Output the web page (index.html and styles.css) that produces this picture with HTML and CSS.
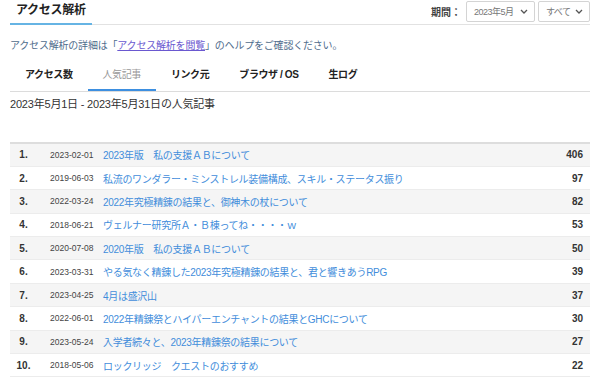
FILE: index.html
```html
<!DOCTYPE html>
<html lang="ja">
<head>
    <meta charset="UTF-8">
    <title>アクセス解析</title>
    <link rel="stylesheet" href="styles.css">
</head>
<body>
    <div class="page">
        <div class="head">
            <h1 class="title">アクセス解析</h1>
            <div class="period">
                <span class="period-label">期間：</span>
                <div class="select select-month"><span>2023年5月</span>
                    <svg class="chev" width="8" height="5" viewBox="0 0 8 5"><path d="M1 1l3 3 3-3" fill="none" stroke="#555" stroke-width="1.3"/></svg>
                </div>
                <div class="select select-kind"><span>すべて</span>
                    <svg class="chev" width="8" height="5" viewBox="0 0 8 5"><path d="M1 1l3 3 3-3" fill="none" stroke="#555" stroke-width="1.3"/></svg>
                </div>
            </div>
        </div>

        <p class="help">アクセス解析の詳細は「<a href="#">アクセス解析を閲覧</a>」のヘルプをご確認ください。</p>

        <div class="tabs">
            <span class="tab">アクセス数</span>
            <span class="tab active">人気記事</span>
            <span class="tab">リンク元</span>
            <span class="tab">ブラウザ / OS</span>
            <span class="tab">生ログ</span>
        </div>

        <p class="range">2023年5月1日 - 2023年5月31日の人気記事</p>

        <table class="ranking">
            <colgroup>
                <col class="c-rank">
                <col class="c-date">
                <col>
                <col class="c-count">
            </colgroup>
            <tr><td class="rank">1.</td><td class="date">2023-02-01</td><td class="post"><a href="#">2023年版　私の支援ＡＢについて</a></td><td class="count">406</td></tr>
            <tr><td class="rank">2.</td><td class="date">2019-06-03</td><td class="post"><a href="#">私流のワンダラー・ミンストレル装備構成、スキル・ステータス振り</a></td><td class="count">97</td></tr>
            <tr><td class="rank">3.</td><td class="date">2022-03-24</td><td class="post"><a href="#">2022年究極精錬の結果と、御神木の杖について</a></td><td class="count">82</td></tr>
            <tr><td class="rank">4.</td><td class="date">2018-06-21</td><td class="post"><a href="#">ヴェルナー研究所Ａ・Ｂ棟ってね・・・・ｗ</a></td><td class="count">53</td></tr>
            <tr><td class="rank">5.</td><td class="date">2020-07-08</td><td class="post"><a href="#">2020年版　私の支援ＡＢについて</a></td><td class="count">50</td></tr>
            <tr><td class="rank">6.</td><td class="date">2023-03-31</td><td class="post"><a href="#">やる気なく精錬した2023年究極精錬の結果と、君と響きあうRPG</a></td><td class="count">39</td></tr>
            <tr><td class="rank">7.</td><td class="date">2023-04-25</td><td class="post"><a href="#">4月は盛沢山</a></td><td class="count">37</td></tr>
            <tr><td class="rank">8.</td><td class="date">2022-06-01</td><td class="post"><a href="#">2022年精錬祭とハイパーエンチャントの結果とGHCについて</a></td><td class="count">30</td></tr>
            <tr><td class="rank">9.</td><td class="date">2023-05-24</td><td class="post"><a href="#">入学者続々と、2023年精錬祭の結果について</a></td><td class="count">27</td></tr>
            <tr><td class="rank">10.</td><td class="date">2018-05-06</td><td class="post"><a href="#">ロックリッジ　クエストのおすすめ</a></td><td class="count">22</td></tr>
        </table>
    </div>
</body>
</html>
```

FILE: styles.css
```css
body, html {
    margin: 0;
    padding: 0;
    background: #fff;
    font-family: "Liberation Sans", "Noto Sans CJK JP", sans-serif;
    color: #333;
}

.page {
    padding: 0 10px;
}

/* header with title and period selects */
.head {
    display: flex;
    justify-content: space-between;
    border-bottom: 1px solid #e2e2e2;
    height: 24px;
}

.title {
    margin: 0 0 -1px 0;
    padding: 3px 6px 0;
    font-size: 12px;
    font-weight: bold;
    letter-spacing: -0.3px;
    line-height: 14px;
    color: #222;
    border-bottom: 2px solid #66b4e4;
    box-sizing: border-box;
    height: 25px;
}

.period {
    display: flex;
    align-items: center;
    height: 21px;
    margin-top: 1px;
    gap: 3px;
}

.period-label {
    font-size: 10px;
    font-weight: bold;
    color: #444;
    margin-right: 2px;
}

.select {
    box-sizing: border-box;
    height: 21px;
    border: 1px solid #d4d4d4;
    border-radius: 2px;
    display: flex;
    align-items: center;
    justify-content: space-between;
    padding: 0 6px 0 7px;
    font-size: 9px;
    color: #777;
    letter-spacing: -0.5px;
}

.select-month {
    width: 69px;
}

.select-kind {
    width: 52px;
}

.help {
    margin: 14px 0 0;
    font-size: 10px;
    line-height: 14px;
    letter-spacing: -0.2px;
    color: #4f6c8c;
}

.help a {
    color: #6a58d0;
}

/* tabs */
.tabs {
    display: flex;
    margin-top: 7px;
    border-bottom: 1px solid #dcdcdc;
}

.tab {
    padding: 8px 15px 7px;
    font-size: 10px;
    line-height: 14px;
    font-weight: bold;
    letter-spacing: -0.4px;
    color: #222;
    border-bottom: 2px solid transparent;
}

.tab.active {
    color: #999;
    font-weight: normal;
    border-bottom-color: #3d8fe0;
}

.range {
    margin: 5px 0 0;
    font-size: 11px;
    line-height: 14px;
    color: #333;
    letter-spacing: -0.2px;
}

/* ranking table */
.ranking {
    margin-top: 31px;
    width: 100%;
    border-collapse: collapse;
    table-layout: fixed;
    border-top: 2px solid #dddddd;
}

.c-rank {
    width: 27px;
}

.c-date {
    width: 66px;
}

.c-count {
    width: 50px;
}

.ranking tr {
    height: 23.4px;
    border-bottom: 1px solid #ececec;
}

.ranking tr:nth-child(odd) {
    background: #f5f5f5;
}

.ranking td {
    padding: 0;
    white-space: nowrap;
    overflow: hidden;
}

.rank {
    text-align: center;
    font-size: 10px;
    font-weight: bold;
    color: #333;
}

.date {
    padding-left: 13px !important;
    font-size: 8.5px;
    color: #444;
}

.post {
    font-size: 10px;
    letter-spacing: -0.3px;
}

.post a {
    color: #428ddb;
    text-decoration: none;
}

.count {
    text-align: right;
    padding-right: 7px !important;
    font-size: 10px;
    font-weight: bold;
    color: #333;
}
```
